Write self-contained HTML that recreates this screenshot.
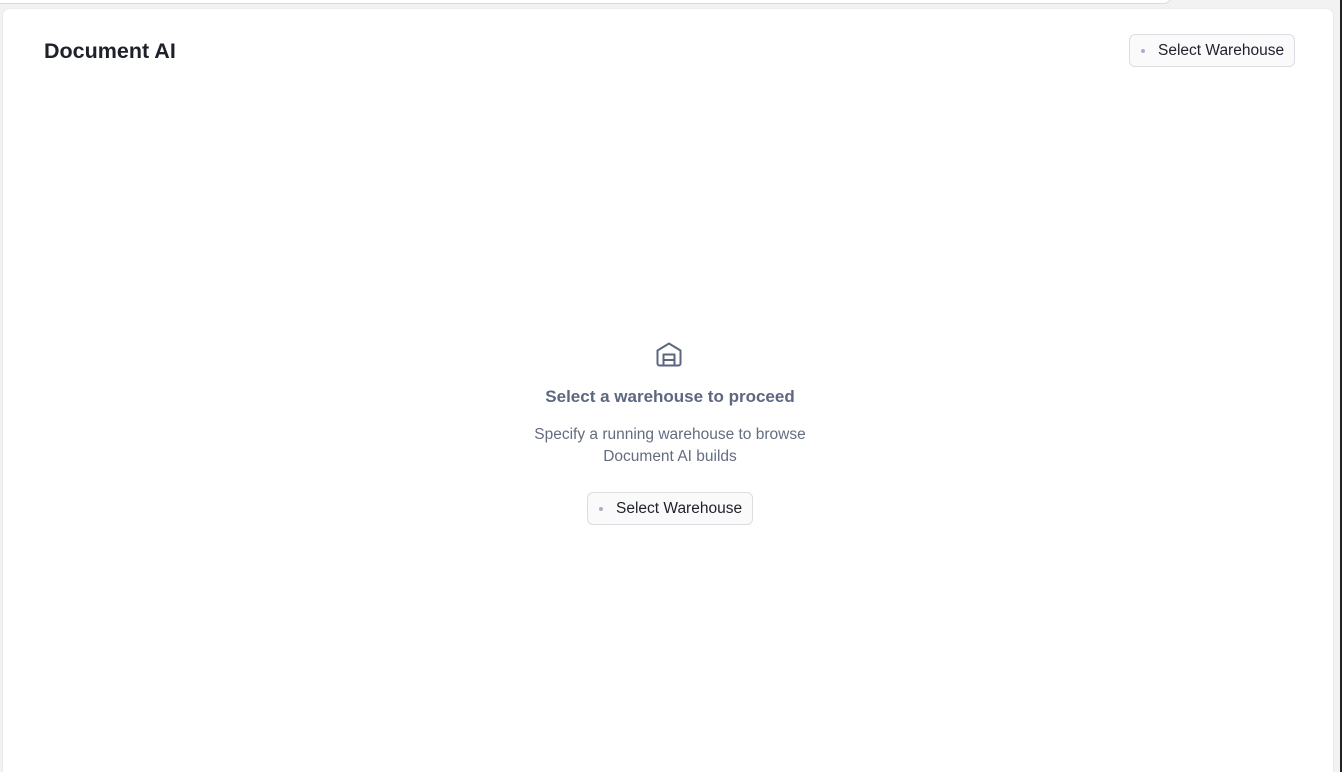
<!DOCTYPE html>
<html><head><style>
*{box-sizing:border-box;margin:0;padding:0}
html,body{width:1342px;height:772px;overflow:hidden}
body{background:#f2f2f3;font-family:"Liberation Sans",sans-serif;position:relative}
.tab{position:absolute;left:-10px;top:-20px;width:1183px;height:24px;background:#fff;border:1px solid #dcdcdf;border-radius:10px}
.panel{position:absolute;left:2px;top:8px;width:1332px;height:764px;background:#fff;border:1px solid #ececef;border-bottom:none;border-radius:8px 8px 0 0}
.edge{position:absolute;right:0;top:0;width:2px;height:772px;background:#222}
h1{position:absolute;left:41px;top:30px;font-size:21.5px;font-weight:bold;color:#1e2129}
.btn{position:absolute;height:33px;border:1px solid #dcdde3;border-radius:6px;background:#fafafb;font-size:15.5px;color:#1e2129;display:flex;align-items:center;padding-left:28px;width:166px}
.btn::before{content:"";position:absolute;left:11px;top:14px;width:4px;height:4px;border-radius:50%;background:#a9b0c4}
.center{position:absolute;left:0;width:1334px;text-align:center}
</style></head><body>
<div class="tab"></div>
<div class="panel">
<h1>Document AI</h1>
<div class="btn" style="left:1126px;top:25px">Select Warehouse</div>
<svg style="position:absolute;left:652px;top:331px" width="28" height="28" viewBox="0 0 28 28" fill="none" stroke="#5c6680" stroke-width="2" stroke-linejoin="round"><path d="M2.5 10.5 L14 3.5 L25.5 10.5 V23.5 a2 2 0 0 1 -2 2 H4.5 a2 2 0 0 1 -2 -2 Z"/><path d="M8.5 25.5 V14.5 H19.5 V25.5 M8.5 20 H19.5"/></svg>
<div class="center" style="top:378px;font-size:17px;font-weight:bold;color:#5d6780">Select a warehouse to proceed</div>
<div class="center" style="top:415px;font-size:15.5px;line-height:22px;color:#646c80">Specify a running warehouse to browse<br>Document AI builds</div>
<div class="btn" style="left:584px;top:483px;width:166px">Select Warehouse</div>
</div>
<div class="edge"></div>
</body></html>
